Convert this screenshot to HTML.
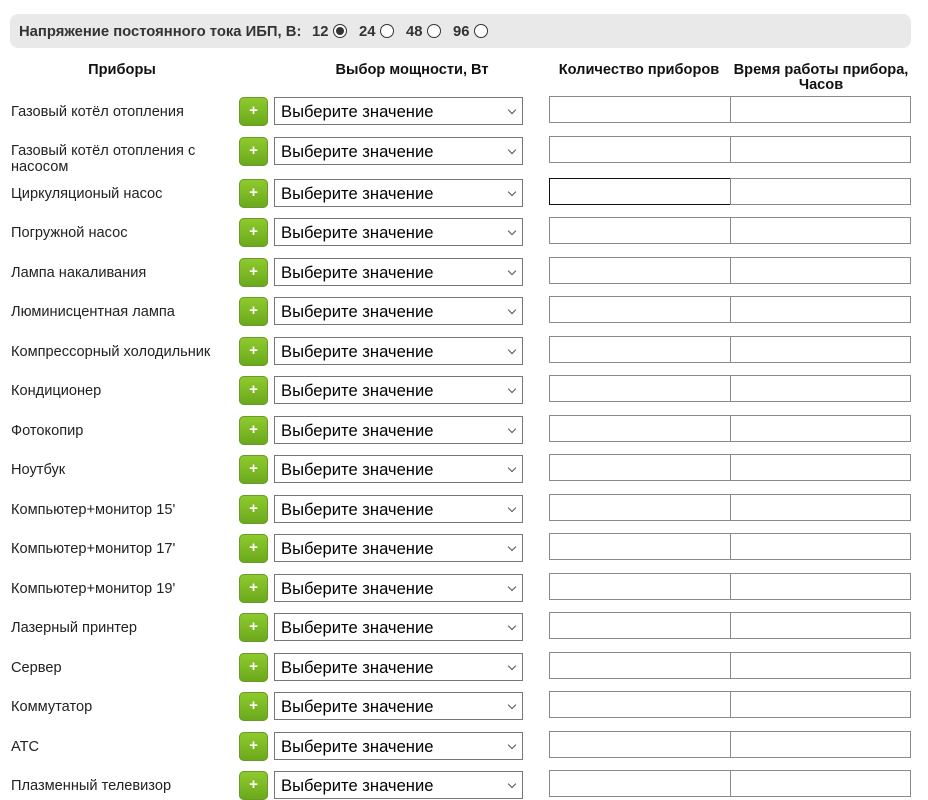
<!DOCTYPE html>
<html><head><meta charset="utf-8"><style>
body{margin:0;width:928px;height:800px;background:#fff;font-family:"Liberation Sans",Arial,sans-serif;position:relative;overflow:hidden}
.bar{position:absolute;left:10px;top:14px;width:901px;height:34px;background:#e9e9e9;border-radius:8px}
.bar span{position:absolute;top:10px;font-size:14.8px;font-weight:bold;color:#333}
.rad{position:absolute;top:10px;width:14px;height:14px;border:1px solid #333;border-radius:50%;box-sizing:border-box;background:#fff}
.rad.on::after{content:"";position:absolute;left:2px;top:2px;width:8px;height:8px;border-radius:50%;background:#333}
.h{position:absolute;font-size:14.6px;font-weight:bold;color:#111;text-align:center;line-height:15px}
.lbl{position:absolute;left:11px;font-size:14.6px;color:#222;line-height:16px}
.btn{position:absolute;left:239px;width:29px;height:29px;border-radius:5px;background:linear-gradient(#8fcb2e,#6aa81c);box-shadow:inset 0 0 0 1px #6a9a2a;color:#fff;font-weight:bold;font-size:15px;text-align:center;line-height:27px}
.sel{position:absolute;left:274px;width:249px;height:28px;border:1px solid #767676;box-sizing:border-box;font-size:16.6px;color:#000;padding-left:6px;line-height:27px}
.sel::after{content:"";position:absolute;right:7px;top:9px;width:5px;height:5px;border-right:1px solid #555;border-bottom:1px solid #555;transform:rotate(45deg)}
.in{position:absolute;width:182px;height:27px;border:1px solid #8a8a8a;box-sizing:border-box}
</style></head><body>
<div class="bar">
<span style="left:9px">Напряжение постоянного тока ИБП, В:</span>
<span style="left:302px">12</span><div class="rad on" style="left:323px"></div>
<span style="left:349px">24</span><div class="rad" style="left:370px"></div>
<span style="left:396px">48</span><div class="rad" style="left:417px"></div>
<span style="left:443px">96</span><div class="rad" style="left:464px"></div>
</div>
<div class="h" style="left:60px;width:124px;top:63px">Приборы</div>
<div class="h" style="left:300px;width:224px;top:63px">Выбор мощности, Вт</div>
<div class="h" style="left:548px;width:182px;top:63px">Количество приборов</div>
<div class="h" style="left:728px;width:186px;top:63px">Время работы прибора,<br>Часов</div>
<div id="rows"></div>
<script>
var L=["Газовый котёл отопления","Газовый котёл отопления с<br>насосом","Циркуляционый насос","Погружной насос","Лампа накаливания","Люминисцентная лампа","Компрессорный холодильник","Кондиционер","Фотокопир","Ноутбук","Компьютер+монитор 15'","Компьютер+монитор 17'","Компьютер+монитор 19'","Лазерный принтер","Сервер","Коммутатор","АТС","Плазменный телевизор"];
var C=[111,151,193,232,272,311,351,390,430,469,509,548,588,627,667,706,746,785];
var h="";
for(var i=0;i<L.length;i++){var c=C[i];
var ly=i==1?c-8:c-7;
h+='<div class="lbl" style="top:'+ly+'px">'+L[i]+'</div>';
h+='<div class="btn" style="top:'+(c-14)+'px">+</div>';
h+='<div class="sel" style="top:'+(c-14)+'px">Выберите значение</div>';
h+='<div class="in" style="left:549px;top:'+(c-15)+'px'+(i==2?';border-color:#111':'')+'"></div>';
h+='<div class="in" style="left:730px;top:'+(c-15)+'px;width:181px"></div>';}
document.getElementById("rows").innerHTML=h;
</script>
</body></html>
